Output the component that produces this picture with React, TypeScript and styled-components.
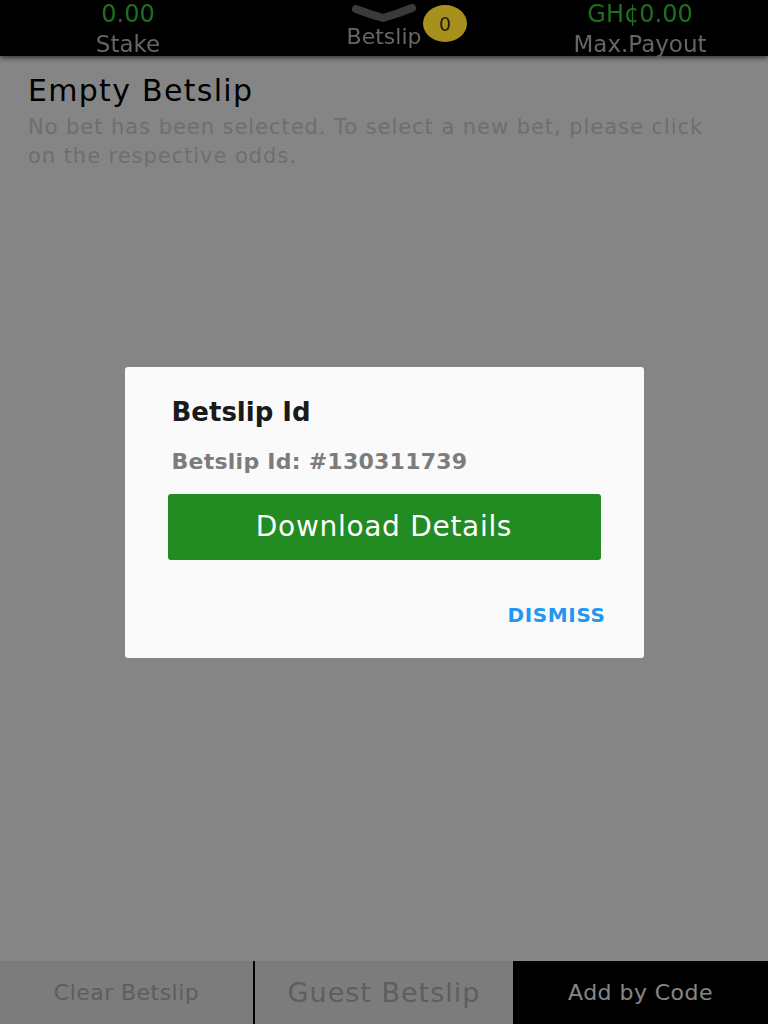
import styled, { createGlobalStyle } from 'styled-components'

const GlobalStyle = createGlobalStyle`
  html, body {
    margin: 0;
    padding: 0;
    background: #ffffff;
  }
  body {
    font-family: "DejaVu Sans", "Liberation Sans", sans-serif;
  }
  * {
    box-sizing: border-box;
  }
`

const Page = styled.div`
  display: flex;
  flex-direction: column;
  min-height: 100vh;
  background: #ffffff;
`

const TopBar = styled.header`
  position: relative;
  z-index: 20;
  display: grid;
  grid-template-columns: repeat(3, 1fr);
  height: 56px;
  background: #000000;
  box-shadow: 0 2px 5px rgba(0, 0, 0, 0.6);
`

const Summary = styled.div<{ $center?: boolean }>`
  position: relative;
  display: flex;
  flex-direction: column;
  align-items: center;
  padding-top: ${(p) => (p.$center ? '4px' : '1px')};
  gap: ${(p) => (p.$center ? '1px' : '5px')};
`

const Amount = styled.span`
  font-size: 24px;
  line-height: 26px;
  color: #1c721c;
`

const Label = styled.span<{ $size?: number }>`
  font-size: ${(p) => p.$size ?? 23}px;
  line-height: 24px;
  color: #666666;
`

const Badge = styled.span`
  position: absolute;
  left: 167px;
  top: 5px;
  width: 44px;
  height: 37px;
  border-radius: 50%;
  background: #a8901c;
  color: #1c1c1c;
  font-size: 19px;
  display: flex;
  align-items: center;
  justify-content: center;
`

const Content = styled.main`
  flex: 1;
  padding: 17px 28px 0;
`

const Heading = styled.h2`
  margin: 0;
  font-size: 30px;
  font-weight: 400;
  line-height: 36px;
  letter-spacing: 1.3px;
  color: #000000;
`

const Hint = styled.p`
  margin: 4px 0 0;
  width: 700px;
  font-size: 21px;
  line-height: 29px;
  letter-spacing: 0.95px;
  color: #d4d4d4;
`

const BottomBar = styled.footer`
  display: flex;
  height: 63px;
`

const BarButton = styled.button<{ $width?: number; $dark?: boolean; $size: number }>`
  ${(p) => (p.$width ? `width: ${p.$width}px;` : 'flex: 1;')}
  display: flex;
  align-items: center;
  justify-content: center;
  padding: 0;
  border: none;
  background: ${(p) => (p.$dark ? '#000000' : '#eeeeee')};
  color: ${(p) => (p.$dark ? '#ffffff' : '#b4b4b4')};
  font-family: inherit;
  font-size: ${(p) => p.$size}px;
  letter-spacing: ${(p) => (p.$size > 24 ? '1px' : '0.45px')};
`

const Divider = styled.span`
  width: 2px;
  background: #000000;
`

const Overlay = styled.div`
  position: fixed;
  inset: 0;
  z-index: 10;
  display: flex;
  align-items: center;
  justify-content: center;
  background: rgba(0, 0, 0, 0.48);
`

const Dialog = styled.div`
  width: 519px;
  display: flex;
  flex-direction: column;
  padding: 30px 38px 31px 43px;
  background: #fafafa;
  border-radius: 3px;
`

const DialogTitle = styled.h3`
  margin: 0 0 0 4px;
  font-size: 26px;
  font-weight: 700;
  line-height: 30px;
  color: #1a1a1a;
`

const DialogText = styled.p`
  margin: 22px 0 0 4px;
  font-size: 22px;
  font-weight: 700;
  line-height: 26px;
  letter-spacing: 0.25px;
  color: #7c7c7c;
`

const DownloadButton = styled.button`
  margin: 19px 5px 0 0;
  height: 66px;
  border: none;
  border-radius: 3px;
  background: #228b22;
  color: #ffffff;
  font-family: inherit;
  font-size: 28px;
  letter-spacing: 0.7px;
`

const Dismiss = styled.button`
  align-self: flex-end;
  margin-top: 43px;
  padding: 0;
  border: none;
  background: none;
  color: #2196f3;
  font-family: inherit;
  font-size: 20px;
  font-weight: 700;
  line-height: 24px;
  letter-spacing: 0.6px;
`

function Chevron() {
  return (
    <svg width="70" height="20" viewBox="0 0 70 20">
      <path
        d="M7 5 Q20 10 34 14 Q48 10 63 4"
        fill="none"
        stroke="#3a3a3a"
        strokeWidth="8"
        strokeLinecap="round"
        strokeLinejoin="round"
      />
    </svg>
  )
}

export default function App() {
  return (
    <Page>
      <GlobalStyle />
      <TopBar>
        <Summary>
          <Amount>0.00</Amount>
          <Label>Stake</Label>
        </Summary>
        <Summary $center>
          <Chevron />
          <Label $size={22}>Betslip</Label>
          <Badge>0</Badge>
        </Summary>
        <Summary>
          <Amount>GH¢0.00</Amount>
          <Label>Max.Payout</Label>
        </Summary>
      </TopBar>

      <Content>
        <Heading>Empty Betslip</Heading>
        <Hint>No bet has been selected. To select a new bet, please click on the respective odds.</Hint>
      </Content>

      <BottomBar>
        <BarButton $width={253} $size={22}>
          Clear Betslip
        </BarButton>
        <Divider />
        <BarButton $width={258} $size={27}>
          Guest Betslip
        </BarButton>
        <BarButton $dark $size={22}>
          Add by Code
        </BarButton>
      </BottomBar>

      <Overlay>
        <Dialog>
          <DialogTitle>Betslip Id</DialogTitle>
          <DialogText>Betslip Id: #130311739</DialogText>
          <DownloadButton>Download Details</DownloadButton>
          <Dismiss>DISMISS</Dismiss>
        </Dialog>
      </Overlay>
    </Page>
  )
}
